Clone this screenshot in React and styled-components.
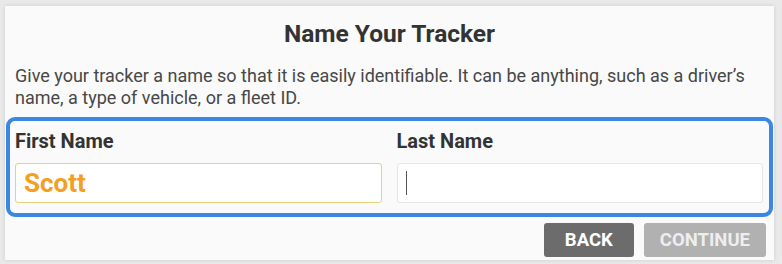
import styled, { createGlobalStyle } from "styled-components";

const GlobalStyle = createGlobalStyle`
  html, body {
    margin: 0;
    padding: 0;
    background: #e9e9e9;
    font-family: Roboto, "Liberation Sans", sans-serif;
  }
`;

const Page = styled.div`
  width: 782px;
  height: 264px;
  padding: 6px 8px 4px 5px;
  box-sizing: border-box;
`;

const Card = styled.div`
  background: #fafafa;
  height: 100%;
  box-shadow: 0 0 4px rgba(0, 0, 0, 0.12);
  padding: 13px 1px 0 1px;
  box-sizing: border-box;
  display: flex;
  flex-direction: column;
`;

const Title = styled.h1`
  margin: 0;
  text-align: center;
  font-size: 24.5px;
  font-weight: 700;
  color: #333;
  line-height: 30px;
`;

const Intro = styled.p`
  margin: 16px 6px 0 9px;
  font-size: 18px;
  line-height: 22px;
  color: #474747;
`;

const Highlight = styled.div`
  margin-top: 8px;
  border: 4px solid #3b88e3;
  border-radius: 9px;
  padding: 8px 6px 10px 5px;
  display: grid;
  grid-template-columns: 1fr 1fr;
  gap: 15px;
`;

const Field = styled.div`
  display: flex;
  flex-direction: column;
`;

const Label = styled.label`
  font-size: 20px;
  font-weight: 700;
  color: #333;
  line-height: 24px;
  margin-bottom: 10px;
`;

const Input = styled.div`
  height: 40px;
  box-sizing: border-box;
  background: #fff;
  border: 1px solid ${(p) => (p.$active ? "#ecd07a" : "#e6e6e6")};
  border-radius: 3px;
  display: flex;
  align-items: center;
  padding-left: 8px;
  font-size: 26px;
  font-weight: 700;
  color: #f2a01e;
`;

const Caret = styled.span`
  display: block;
  width: 1.5px;
  height: 24px;
  background: #555;
`;

const Actions = styled.div`
  display: flex;
  justify-content: flex-end;
  gap: 10px;
  margin-top: 6px;
  padding-right: 7px;
`;

const Button = styled.button`
  height: 34px;
  border: none;
  border-radius: 3px;
  padding: 0 ${(p) => (p.$muted ? "16px" : "21px")};
  font-family: Roboto, "Liberation Sans", sans-serif;
  font-size: 18.5px;
  font-weight: 700;
  background: ${(p) => (p.$muted ? "#b1b1b1" : "#6c6c6c")};
  color: ${(p) => (p.$muted ? "#eeeeee" : "#fff")};
`;

export default function App() {
  return (
    <>
      <GlobalStyle />
      <Page>
        <Card>
          <Title>Name Your Tracker</Title>
          <Intro>
            Give your tracker a name so that it is easily identifiable. It can be anything, such as a driver’s
            name, a type of vehicle, or a fleet ID.
          </Intro>
          <Highlight>
            <Field>
              <Label>First Name</Label>
              <Input $active>Scott</Input>
            </Field>
            <Field>
              <Label>Last Name</Label>
              <Input>
                <Caret />
              </Input>
            </Field>
          </Highlight>
          <Actions>
            <Button>BACK</Button>
            <Button $muted>CONTINUE</Button>
          </Actions>
        </Card>
      </Page>
    </>
  );
}
